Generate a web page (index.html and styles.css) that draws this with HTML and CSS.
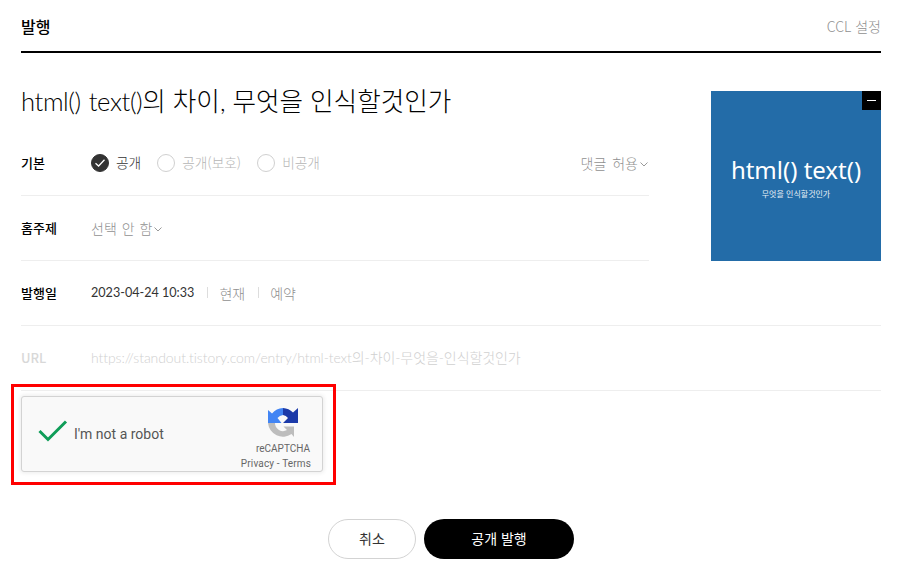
FILE: index.html
```html
<!DOCTYPE html>
<html lang="ko">

<head>
    <meta charset="UTF-8">
    <meta name="viewport" content="width=device-width, initial-scale=1.0">
    <title>발행</title>
    <link rel="stylesheet" href="styles.css">
</head>

<body>
    <div class="layer">
        <div class="layer_head">
            <strong class="head_title">발행</strong>
            <span class="head_link">CCL 설정</span>
        </div>

        <div class="top_area">
            <div class="top_left">
                <h2 class="post_title"><span class="title_en">html() text()</span>의 차이, 무엇을 인식할것인가</h2>
                <div class="row row_first">
                    <span class="row_label">기본</span>
                    <div class="radio_group">
                        <span class="radio radio_on">
                            <span class="radio_icon radio_icon_on">
                                <svg width="12" height="10" viewBox="0 0 12 10">
                                    <path d="M1.5 5.2 4.6 8 10.5 1.8" fill="none" stroke="#fff" stroke-width="1.3" />
                                </svg>
                            </span>
                            <span class="radio_text">공개</span>
                        </span>
                        <span class="radio">
                            <span class="radio_icon"></span>
                            <span class="radio_text">공개(보호)</span>
                        </span>
                        <span class="radio">
                            <span class="radio_icon"></span>
                            <span class="radio_text">비공개</span>
                        </span>
                    </div>
                    <span class="select_text select_right">댓글 허용
                        <svg class="arrow" width="8" height="5" viewBox="0 0 8 5">
                            <path d="M.5.5 4 4 7.5.5" fill="none" stroke="#999" />
                        </svg>
                    </span>
                </div>
                <div class="row">
                    <span class="row_label">홈주제</span>
                    <span class="select_text">선택 안 함
                        <svg class="arrow" width="8" height="5" viewBox="0 0 8 5">
                            <path d="M.5.5 4 4 7.5.5" fill="none" stroke="#999" />
                        </svg>
                    </span>
                </div>
            </div>
            <div class="thumb">
                <button class="thumb_btn"><span class="thumb_minus"></span></button>
                <div class="thumb_big">html() text()</div>
                <div class="thumb_small">무엇을 인식할것인가</div>
            </div>
        </div>

        <div class="row row_wide">
            <span class="row_label">발행일</span>
            <span class="date">2023-04-24 10:33</span>
            <span class="date_opt">현재</span>
            <span class="date_opt">예약</span>
        </div>
        <div class="row row_wide">
            <span class="row_label row_label_off">URL</span>
            <span class="url">https://standout.tistory.com/entry/html-text의-차이-무엇을-인식할것인가</span>
        </div>

        <div class="captcha_wrap">
            <div class="captcha">
                <svg class="captcha_check" width="30" height="24" viewBox="0 0 30 24">
                    <path d="M1.500 11 10 19.500 28 1.500" fill="none" stroke="#0f9d58" stroke-width="3" />
                </svg>
                <span class="captcha_text">I'm not a robot</span>
                <div class="captcha_brand">
                    <svg class="captcha_logo" width="30" height="32" viewBox="0 0 30 32">
                        <path d="M15 1A15 15 0 0 1 25 5.500L30 1V16H15L20 11A8 8 0 0 0 15 8Z" fill="#1c3aa9" />
                        <path d="M15 1V8A8 8 0 0 0 9.500 11L13.500 16H0V3L4 6.500A15 15 0 0 1 15 1Z" fill="#4285f4" />
                        <path d="M0 16H7A8 8 0 0 0 19 23L15.500 19.500H26V30L23.500 27A15 15 0 0 1 0 16Z" fill="#bdbdbd" />
                    </svg>
                    <span class="captcha_name">reCAPTCHA</span>
                    <span class="captcha_links">Privacy - Terms</span>
                </div>
            </div>
            <div class="captcha_mark"></div>
        </div>

        <div class="btn_area">
            <button class="btn btn_cancel">취소</button>
            <button class="btn btn_publish">공개 발행</button>
        </div>
    </div>
</body>

</html>
```

FILE: styles.css
```css
html {
    height: 100%;
}

body {
    margin: 0;
    padding: 0;
    background: #fff;
    font-family: "Noto Sans CJK KR", "Noto Sans", sans-serif;
    color: #333;
    overflow: hidden;
}

.layer {
    width: 860px;
    margin-left: 21px;
}

.layer_head {
    display: flex;
    justify-content: space-between;
    align-items: center;
    height: 50px;
    padding-top: 1px;
    border-bottom: 2px solid #000;
    box-sizing: content-box;
}

.head_title {
    font-size: 16px;
    font-weight: 500;
    color: #000;
}

.head_link {
    font-size: 14px;
    font-weight: 300;
    color: #909090;
}

.top_area {
    display: flex;
    justify-content: space-between;
    align-items: flex-start;
}

.top_left {
    width: 628px;
}

.post_title {
    margin: 0;
    height: 78px;
    padding-top: 30px;
    box-sizing: border-box;
    font-family: Lato, "Noto Sans CJK KR", sans-serif;
    font-size: 25.6px;
    line-height: 36px;
    font-weight: 300;
    color: #000;
    white-space: nowrap;
}

.title_en {
    letter-spacing: -.4px;
    word-spacing: 1.5px;
}

.row {
    display: flex;
    align-items: center;
    height: 65px;
    box-sizing: border-box;
    border-bottom: 1px solid #eee;
}

.row_wide {
    width: 860px;
}

.row_label {
    width: 70px;
    flex: none;
    font-size: 13px;
    font-weight: 500;
    color: #000;
    margin-top: -1px;
}

.row_label_off {
    color: #d8d8d8;
}

.radio_group {
    display: flex;
    gap: 16px;
}

.radio {
    display: flex;
    align-items: center;
    gap: 7px;
    font-size: 13.7px;
    font-weight: 300;
    color: #b5b5b5;
}

.radio_text {
    margin-top: -2px;
}

.radio_on {
    color: #333;
}

.radio_icon {
    display: flex;
    align-items: center;
    justify-content: center;
    width: 18px;
    height: 18px;
    box-sizing: border-box;
    border: 1px solid #d0d0d0;
    border-radius: 50%;
}

.radio_icon_on {
    background: #333;
    border-color: #333;
}

.select_text {
    display: flex;
    align-items: center;
    gap: 3px;
    font-size: 14px;
    word-spacing: 1px;
    font-weight: 300;
    color: #909090;
    margin-top: -1px;
}

.select_right {
    margin-left: auto;
    margin-right: 1px;
    word-spacing: 2px;
}

.arrow {
    margin-top: 3px;
    margin-left: -1px;
}

.thumb {
    position: relative;
    width: 170px;
    height: 170px;
    margin-top: 38px;
    background: #236ca8;
    color: #fff;
    display: flex;
    flex-direction: column;
    align-items: center;
    justify-content: center;
}

.thumb_btn {
    position: absolute;
    top: 0;
    right: 0;
    display: flex;
    align-items: center;
    justify-content: center;
    width: 19px;
    height: 19px;
    padding: 0;
    border: 0;
    background: #000;
}

.thumb_minus {
    width: 9px;
    height: 1px;
    background: #fff;
}

.thumb_big {
    font-family: "Noto Sans", sans-serif;
    font-size: 24px;
    line-height: 34px;
    margin-top: 2px;
}

.thumb_small {
    font-size: 8px;
    line-height: 14px;
    color: #e8f0f6;
}

.date {
    font-family: Lato, "Noto Sans CJK KR", sans-serif;
    font-size: 12.6px;
    color: #333;
    margin-top: -1px;
}

.date_opt {
    font-size: 14px;
    font-weight: 300;
    color: #909090;
    margin-left: 13px;
    padding-left: 12px;
    margin-top: -1px;
    background: linear-gradient(#ddd, #ddd) left center / 1px 11px no-repeat;
}

.url {
    font-family: Lato, "Noto Sans CJK KR", sans-serif;
    font-size: 14px;
    letter-spacing: -.08px;
    font-weight: 300;
    color: #d0d0d0;
    margin-top: -2px;
}

.captcha_wrap {
    position: relative;
    width: 302px;
    margin-top: 5px;
}

.captcha {
    display: flex;
    align-items: center;
    height: 76px;
    box-sizing: border-box;
    background: #f9f9f9;
    border: 1px solid #d3d3d3;
    border-radius: 3px;
    box-shadow: 0 0 4px 1px rgba(0, 0, 0, .08);
    font-family: Roboto, sans-serif;
    color: #555;
}

.captcha_check {
    margin-left: 16px;
    margin-top: -4px;
}

.captcha_text {
    margin-left: 6px;
    font-size: 14px;
}

.captcha_brand {
    align-self: flex-end;
    margin-left: auto;
    margin-right: 11px;
    display: flex;
    flex-direction: column;
    align-items: flex-end;
}

.captcha_logo {
    margin-right: 13px;
}

.captcha_name {
    font-size: 10px;
    line-height: 14px;
    margin-top: 3px;
    margin-bottom: 1px;
    margin-right: 1px;
    color: #666;
}

.captcha_links {
    font-size: 10px;
    line-height: 14px;
    letter-spacing: .15px;
    color: #666;
}

.captcha_mark {
    position: absolute;
    top: -12px;
    left: -10px;
    width: 319px;
    height: 95px;
    border: 3px solid #f00;
}

.btn_area {
    display: flex;
    justify-content: center;
    gap: 8px;
    width: 860px;
    margin-top: 47px;
}

.btn {
    height: 40px;
    border-radius: 20px;
    font-family: "Noto Sans CJK KR", sans-serif;
    font-size: 14px;
    padding: 0 0 3px;
}

.btn_cancel {
    width: 88px;
    background: #fff;
    border: 1px solid #d3d3d3;
    color: #333;
}

.btn_publish {
    width: 150px;
    background: #000;
    border: 0;
    color: #fff;
}
```
